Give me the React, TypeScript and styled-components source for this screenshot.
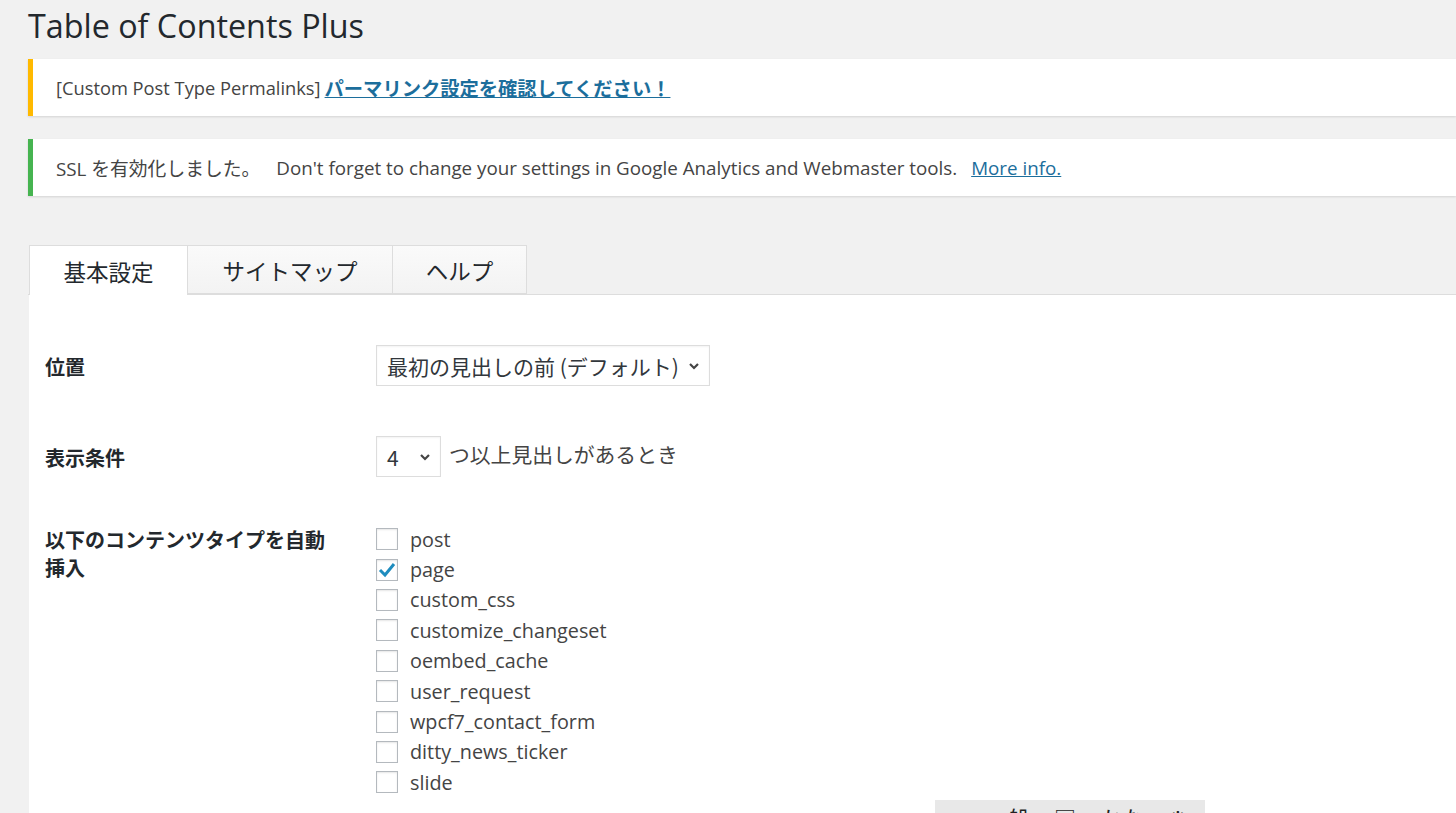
import styled, { createGlobalStyle } from "styled-components";

const GlobalStyle = createGlobalStyle`
  html, body {
    margin: 0;
    padding: 0;
    background: #f1f1f1;
    height: 813px;
    overflow: hidden;
  }
  body {
    font-family: "Open Sans", "Noto Sans CJK JP", sans-serif;
    color: #444;
  }
`;

const Page = styled.div`
  position: relative;
  display: flex;
  flex-direction: column;
  width: 1456px;
  height: 813px;
  overflow: hidden;
  padding-left: 28px;
  box-sizing: border-box;
`;

const Title = styled.h1`
  margin: 0;
  padding-top: 4px;
  height: 59px;
  flex: none;
  font-family: "Open Sans", "Noto Sans CJK JP", sans-serif;
  font-size: 32.3px;
  font-weight: 400;
  color: #23282d;
  line-height: 42px;
  box-sizing: border-box;
`;

const Notice = styled.div<{ $accent: string; $size: number }>`
  display: flex;
  align-items: center;
  flex: none;
  height: 57px;
  margin-bottom: 23px;
  background: #fff;
  border-left: 5px solid ${(p) => p.$accent};
  box-shadow: 0 1px 2px rgba(0, 0, 0, 0.12);
  padding-left: 23px;
  font-size: ${(p) => p.$size}px;
  color: #444;
  white-space: nowrap;
`;

const Gap = styled.span`
  display: inline-block;
  width: 16px;
`;

const NoticeLink = styled.a<{ $bold?: boolean }>`
  color: #1c6e9c;
  text-decoration: underline;
  font-weight: ${(p) => (p.$bold ? 700 : 400)};
  font-size: ${(p) => (p.$bold ? "19.3px" : "inherit")};
  margin-left: ${(p) => (p.$bold ? "4px" : "14px")};
`;

const Tabs = styled.div`
  display: flex;
  flex: none;
  margin-top: 26px;
  padding-left: 1px;
  border-bottom: 1px solid #ddd;
  height: 49px;
  box-sizing: content-box;
`;

const Tab = styled.div<{ $active?: boolean; $w: number }>`
  width: ${(p) => p.$w}px;
  box-sizing: border-box;
  height: ${(p) => (p.$active ? "50px" : "49px")};
  display: flex;
  align-items: center;
  justify-content: center;
  border: 1px solid #ddd;
  border-bottom: ${(p) => (p.$active ? "none" : "1px solid #ddd")};
  border-left-width: ${(p) => (p.$active ? "1px" : "0")};
  background: ${(p) => (p.$active ? "#fff" : "linear-gradient(#fafafa, #f3f3f3)")};
  font-family: "Noto Sans CJK JP", sans-serif;
  font-size: 22.5px;
  color: #23282d;
  position: relative;
  z-index: 1;
`;

const Panel = styled.div`
  background: #fff;
  margin-left: 1px;
  padding: 25px 0 0 16px;
  flex: 1;
`;

const Row = styled.div<{ $top?: boolean }>`
  display: grid;
  grid-template-columns: 331px 1fr;
  align-items: ${(p) => (p.$top ? "start" : "center")};
  padding: ${(p) => (p.$top ? "22px 0 0" : "25px 0")};
`;

const Label = styled.div`
  font-family: "Noto Sans CJK JP", sans-serif;
  font-weight: 700;
  font-size: 20px;
  line-height: 28px;
  color: #23282d;
  width: 296px;
  padding-top: 2px;
`;

const Field = styled.div`
  display: flex;
  align-items: flex-start;
  gap: 8px;
`;

const FakeSelect = styled.div<{ $w: number }>`
  width: ${(p) => p.$w}px;
  height: 41px;
  box-sizing: border-box;
  border: 1px solid #ddd;
  box-shadow: inset 0 1px 2px rgba(0, 0, 0, 0.05);
  display: flex;
  align-items: center;
  justify-content: space-between;
  padding: 0 9px 0 10px;
  font-family: "Noto Sans CJK JP", sans-serif;
  font-size: 21px;
  color: #32373c;
  background: #fff;
  white-space: nowrap;
`;

const AfterText = styled.span`
  font-family: "Noto Sans CJK JP", sans-serif;
  font-size: 20.8px;
  color: #444;
  line-height: 36px;
`;

const CheckList = styled.div`
  display: flex;
  flex-direction: column;
`;

const CheckRow = styled.label`
  display: flex;
  align-items: center;
  gap: 12px;
  height: 30.4px;
  font-size: 19.8px;
  color: #444;
`;

const Box = styled.span`
  width: 22px;
  height: 22px;
  box-sizing: border-box;
  border: 1px solid #b4b9be;
  background: #fff;
  box-shadow: inset 0 1px 2px rgba(0, 0, 0, 0.1);
  display: flex;
  align-items: center;
  justify-content: center;
`;

const Ime = styled.div`
  position: absolute;
  left: 935px;
  top: 800px;
  width: 270px;
  height: 13px;
  overflow: hidden;
  background: #e8e8e8;
  display: flex;
  gap: 24px;
  padding-left: 38px;
  box-sizing: border-box;
  font-family: "Noto Sans CJK JP", sans-serif;
  font-size: 22px;
  line-height: 34px;
  color: #222;
`;

const Chevron = () => (
  <svg width="12" height="12" viewBox="0 0 12 12">
    <path d="M2 4 L6 8 L10 4" fill="none" stroke="#444" strokeWidth="2.2" />
  </svg>
);

const types = [
  "post",
  "page",
  "custom_css",
  "customize_changeset",
  "oembed_cache",
  "user_request",
  "wpcf7_contact_form",
  "ditty_news_ticker",
  "slide",
];

export default function App() {
  return (
    <Page>
      <GlobalStyle />
      <Title>Table of Contents Plus</Title>

      <Notice $accent="#ffb900" $size={18.3}>
        [Custom Post Type Permalinks]
        <NoticeLink $bold href="#">パーマリンク設定を確認してください！</NoticeLink>
      </Notice>

      <Notice $accent="#46b450" $size={18.8}>
        SSL を有効化しました。
        <Gap />
        Don't forget to change your settings in Google Analytics and Webmaster tools.
        <NoticeLink href="#">More info.</NoticeLink>
      </Notice>

      <Tabs>
        <Tab $active $w={159}>基本設定</Tab>
        <Tab $w={205}>サイトマップ</Tab>
        <Tab $w={134}>ヘルプ</Tab>
      </Tabs>

      <Panel>
        <Row>
          <Label>位置</Label>
          <Field>
            <FakeSelect $w={334}>
              最初の見出しの前 (デフォルト)
              <Chevron />
            </FakeSelect>
          </Field>
        </Row>

        <Row>
          <Label>表示条件</Label>
          <Field>
            <FakeSelect $w={65}>
              4
              <Chevron />
            </FakeSelect>
            <AfterText>つ以上見出しがあるとき</AfterText>
          </Field>
        </Row>

        <Row $top>
          <Label>以下のコンテンツタイプを自動挿入</Label>
          <CheckList>
            {types.map((t) => (
              <CheckRow key={t}>
                <Box>
                  {t === "page" && (
                    <svg width="20" height="20" viewBox="0 0 20 20">
                      <path d="M3 10 L8 15 L17 4" fill="none" stroke="#1e8cbe" strokeWidth="3" />
                    </svg>
                  )}
                </Box>
                {t}
              </CheckRow>
            ))}
          </CheckList>
        </Row>
      </Panel>

      <Ime>
        <span>ｰ</span>
        <span>般</span>
        <span>□</span>
        <span>かな</span>
        <span>⚙</span>
      </Ime>
    </Page>
  );
}
